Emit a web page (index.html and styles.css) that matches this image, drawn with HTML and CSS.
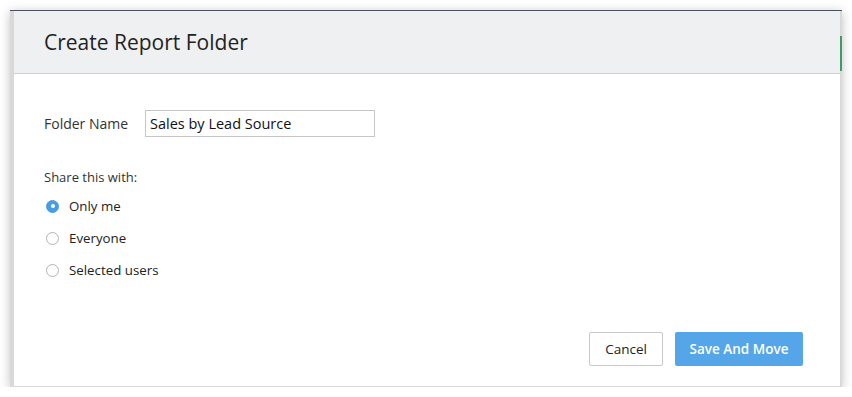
FILE: index.html
```html
<!DOCTYPE html>
<html>
<head>
  <meta charset="UTF-8">
  <title>Create Report Folder</title>
  <link rel="stylesheet" href="styles.css">
</head>
<body>
  <div class="janela">
    <div class="modal">
      <div class="cabecalho">
        <h1>Create Report Folder</h1>
      </div>

      <div class="conteudo">
        <div class="linha">
          <label class="rotulo" for="nome">Folder Name</label>
          <input class="campo" type="text" id="nome" value="Sales by Lead Source">
        </div>

        <p class="compartilhar">Share this with:</p>

        <label class="opcao">
          <input type="radio" name="share" checked>
          <span class="bolinha"></span>
          Only me
        </label>
        <label class="opcao">
          <input type="radio" name="share">
          <span class="bolinha"></span>
          Everyone
        </label>
        <label class="opcao">
          <input type="radio" name="share">
          <span class="bolinha"></span>
          Selected users
        </label>
      </div>

      <div class="rodape">
        <button class="cancelar" type="button">Cancel</button>
        <button class="salvar" type="button">Save And Move</button>
      </div>
    </div>
  </div>
</body>
</html>
```

FILE: styles.css
```css
body {
  margin: 0;
  padding: 10px 10px 0 10px;
  background-color: #ffffff;
  font-family: "Open Sans", "Liberation Sans", sans-serif;
  color: #222;
}

.janela {
  position: relative;
  width: 832px;
  height: 376px;
  border-top: 1px solid #4a5260;
  background-color: #d9d9d9;
  box-shadow: 0 2px 10px rgba(0, 0, 0, 0.25);
  display: flex;
}

/* pedacinho verde da tela de trás */
.janela::after {
  content: "";
  position: absolute;
  top: 25px;
  right: 0;
  width: 2px;
  height: 35px;
  background-color: #3f9a68;
}

.modal {
  flex: 1;
  margin: 0 2px 1px 4px;
  background-color: #fff;
  display: flex;
  flex-direction: column;
}

.cabecalho {
  height: 62px;
  background-color: #eff0f2;
  border-bottom: 1px solid #cfd0d2;
  display: flex;
  align-items: center;
  padding-left: 30px;
}

.cabecalho h1 {
  margin: 0;
  font-size: 21px;
  font-weight: 400;
  color: #222;
}

.conteudo {
  flex: 1;
  padding: 36px 30px 0 30px;
}

.linha {
  display: flex;
  align-items: center;
}

.rotulo {
  width: 101px;
  font-size: 14px;
  color: #333;
}

.campo {
  width: 230px;
  height: 27px;
  box-sizing: border-box;
  border: 1px solid #c6c6c6;
  padding: 0 4px;
  font-family: inherit;
  font-size: 14.5px;
  color: #111;
}

.compartilhar {
  margin: 31px 0 4px 0;
  font-size: 13px;
  color: #333;
}

.opcao {
  display: flex;
  align-items: center;
  height: 32px;
  font-size: 13.3px;
  color: #222;
  cursor: pointer;
}

.opcao input {
  display: none;
}

.bolinha {
  width: 13px;
  height: 13px;
  box-sizing: border-box;
  border: 1px solid #b5b5b5;
  border-radius: 50%;
  margin: 0 10px 0 2px;
  background-color: #fff;
  display: flex;
  justify-content: center;
  align-items: center;
}

.opcao input:checked + .bolinha {
  border-color: #4a9be6;
  background-color: #4a9be6;
}

.opcao input:checked + .bolinha::after {
  content: "";
  width: 4px;
  height: 4px;
  border-radius: 50%;
  background-color: #fff;
}

.rodape {
  display: flex;
  justify-content: flex-end;
  gap: 12px;
  padding: 0 37px 20px 0;
}

.cancelar {
  width: 74px;
  height: 34px;
  background-color: #fff;
  border: 1px solid #c9c9c9;
  border-radius: 2px;
  font-family: inherit;
  font-size: 13.5px;
  color: #222;
  cursor: pointer;
}

.salvar {
  width: 128px;
  height: 34px;
  background-color: #55a5e9;
  border: none;
  border-radius: 2px;
  font-family: inherit;
  font-size: 13.5px;
  font-weight: 600;
  color: #fff;
  cursor: pointer;
}

.salvar:hover {
  background-color: #3f93dc;
}
```
